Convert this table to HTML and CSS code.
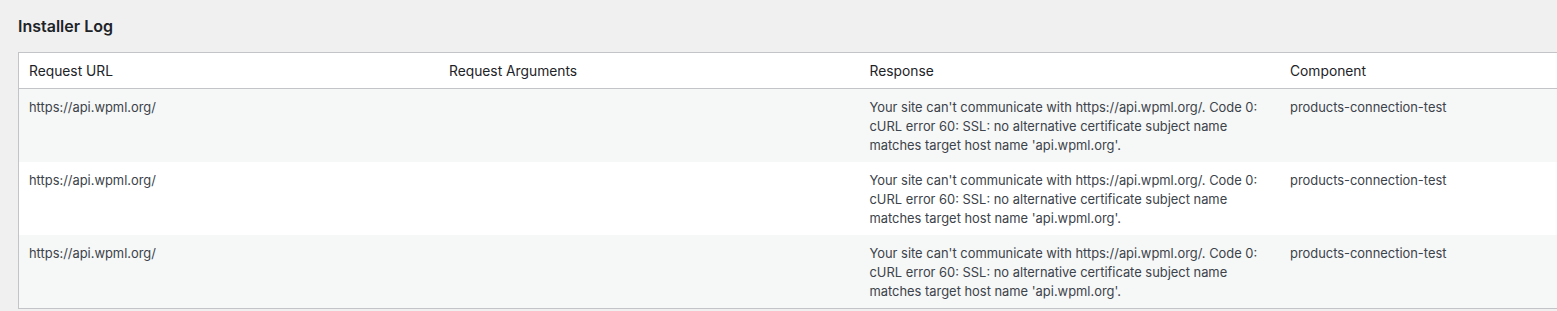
FILE: index.html
```html
<!DOCTYPE html>
<html lang="en">
<head>
    <meta charset="utf-8">
    <link rel="stylesheet" href="styles.css">
    <title>Installer Log</title>
</head>
<body>
<div class="wrap">
    <h2 class="log-title">Installer Log</h2>
    <table class="log-table">
        <thead>
        <tr>
            <th>Request URL</th>
            <th>Request Arguments</th>
            <th>Response</th>
            <th>Component</th>
        </tr>
        </thead>
        <tbody>
        <tr class="alt">
            <td>https://api.wpml.org/</td>
            <td></td>
            <td>Your site can't communicate with https://api.wpml.org/. Code 0: cURL error 60: SSL: no alternative certificate subject name matches target host name 'api.wpml.org'.</td>
            <td>products-connection-test</td>
        </tr>
        <tr>
            <td>https://api.wpml.org/</td>
            <td></td>
            <td>Your site can't communicate with https://api.wpml.org/. Code 0: cURL error 60: SSL: no alternative certificate subject name matches target host name 'api.wpml.org'.</td>
            <td>products-connection-test</td>
        </tr>
        <tr class="alt">
            <td>https://api.wpml.org/</td>
            <td></td>
            <td>Your site can't communicate with https://api.wpml.org/. Code 0: cURL error 60: SSL: no alternative certificate subject name matches target host name 'api.wpml.org'.</td>
            <td>products-connection-test</td>
        </tr>
        </tbody>
    </table>
</div>
</body>
</html>
```

FILE: styles.css
```css
html, body {
  margin: 0;
  padding: 0;
  background-color: #f0f0f1;
  overflow: hidden;
}

body {
  font-family: "Inter", "Liberation Sans", sans-serif;
  color: #1d2327;
}

.wrap {
  padding: 0 0 0 18px;
  width: 1700px;
}

.log-title {
  margin: 0;
  padding: 16px 0 16px;
  font-size: 16px;
  line-height: 20px;
  font-weight: 600;
  color: #1d2327;
}

.log-table {
  width: 1683px;
  border-collapse: collapse;
  table-layout: fixed;
  background-color: #ffffff;
  border: 1px solid #c3c4c7;
}

.log-table th {
  text-align: left;
  font-weight: 400;
  font-size: 13.8px;
  line-height: 19px;
  padding: 9px 10px 7px;
  color: #1d2327;
  border-bottom: 1px solid #c3c4c7;
}

.log-table td {
  vertical-align: top;
  font-size: 12.9px;
  line-height: 19px;
  padding: 9px 10px 7px;
  color: #3c434a;
}

.log-table tr.alt td {
  background-color: #f6f7f7;
}
```
